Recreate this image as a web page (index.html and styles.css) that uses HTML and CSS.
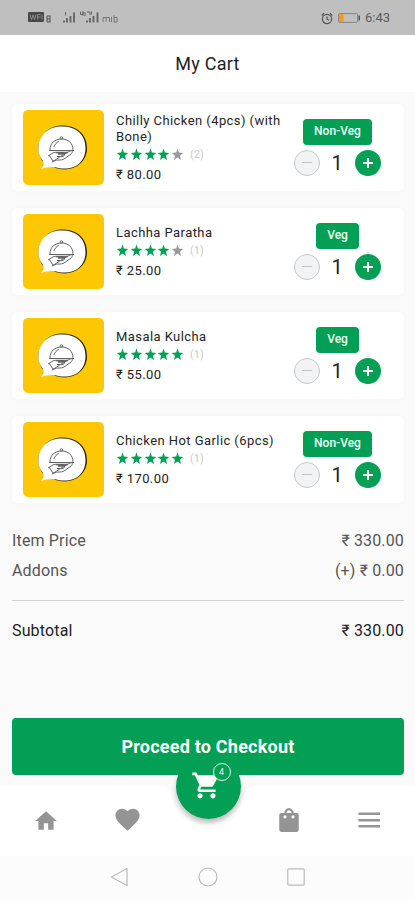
FILE: index.html
```html
<!DOCTYPE html>
<html lang="en">
<head>
<meta charset="utf-8">
<title>My Cart</title>
<link rel="stylesheet" href="styles.css">
</head>
<body>
<svg class="defs" width="0" height="0" aria-hidden="true">
  <symbol id="star" viewBox="0 0 24 24"><path d="M12 17.6 18.6 22l-2.1-7.9L22.500 9l-8-.6L12 1 9.500 8.400l-8 .6 6 5.100L5.400 22z"/></symbol>
  <symbol id="dish" viewBox="0 0 80 75">
    <path d="M19 56c7 0 9 0 13 2 16 5 31-4 31.500-19S53 15.500 39 15.500 14.500 26 15 39c.5 7 3 11 5.500 14z" fill="#302b18"/>
    <path d="M17 59c4-3 3-6 2-9-3-3-4.500-8-4-14 1-12 11-19.500 23-19.500 15 0 24 8 24 21.500 0 15-12 23-27 20-7-2-11-1-18 1z" fill="#fff"/>
    <g fill="none" stroke="#666" stroke-width="1" transform="translate(-.5 1)">
      <path d="M27 39c0-7 5-11 11.500-11S50 32 50 39M26 39.500h25M31 36c1-3 3-5 5-5.500"/>
      <circle cx="38.500" cy="27" r="1.300"/>
      <path d="M25 45l4-2.500c3-2 5-1 7 0h5c2 1 0 3-2 3h-5M40 44l7-4c3-1 3 1 1 3l-7 5c-3 2-7 0-10 2l-2 1zM26 44l4 6"/>
      <path d="M33 41.500h12M35 43h7" stroke-width="1.300"/>
    </g>
  </symbol>
</svg>
<div class="status">
  <svg class="status-left" width="96" height="16" viewBox="0 0 96 16">
    <rect x="1" y="2" width="16" height="10" rx="1" fill="#484848"/>
    <path d="M3 4.500l1.500 5L6 5l1.500 4.500L9 4.500M10.500 9.500v-5h3M10.500 7h3M15 4.500v5" fill="none" stroke="#999" stroke-width=".8"/>
    <path d="M20 6v6M20 6h3v6h-3M20 9h3" fill="none" stroke="#555" stroke-width="1.100"/>
    <path d="M37 12.500v-2M40 12.500V8M43.500 12.500V6M47 12.500V2.500M60 12.500v-2M63 12.500V8M66.500 12.500V6M70.500 12.500V2.500" stroke="#666" stroke-width="1.900"/>
    <path d="M38.500 2v3.500M53.500 1.500v3h2.500V1.500v4.500M58 2v4M60 2h3v3M64.500 1.500v3" fill="none" stroke="#666" stroke-width="1"/>
    <path d="M76 12V7.500h3V12M79 7.500h3.500V12M84.500 7v5M87 5v7h3V7.500h-3" fill="none" stroke="#777" stroke-width="1"/>
  </svg>
  <div class="status-right">
    <svg width="12" height="13" viewBox="0 0 12 13" fill="none" stroke="#555" stroke-width="1.200"><circle cx="6" cy="7" r="4.600"/><path d="M6 4.500V7l2 1.300M.7 3.500 3 1.300M11.300 3.500 9 1.300"/></svg>
    <svg class="battery" width="23" height="12" viewBox="0 0 23 12"><rect x=".6" y="1.600" width="19" height="8.800" rx="1" fill="none" stroke="#858585"/><path d="M1 2h4.500v8H1z" fill="#f39a1d"/><path d="M21.200 3.500v5" stroke="#555" stroke-width="1.500"/></svg>
    <span class="clock">6:43</span>
  </div>
</div>
<header class="header"><h1>My Cart</h1></header>
<main class="main">
  <section class="items">
    <article class="card">
      <svg class="thumb"><use href="#dish"/></svg>
      <div class="info">
        <h2>Chilly Chicken (4pcs) (with<br>Bone)</h2>
        <div class="rating"><svg><use href="#star"/></svg><svg><use href="#star"/></svg><svg><use href="#star"/></svg><svg><use href="#star"/></svg><svg class="off"><use href="#star"/></svg><span>(2)</span></div>
        <p class="price">₹ 80.00</p>
      </div>
      <div class="actions">
        <span class="tag">Non-Veg</span>
        <div class="stepper"><button class="round minus" aria-label="Less"></button><b>1</b><button class="round plus" aria-label="More"></button></div>
      </div>
    </article>
    <article class="card">
      <svg class="thumb"><use href="#dish"/></svg>
      <div class="info">
        <h2>Lachha Paratha</h2>
        <div class="rating"><svg><use href="#star"/></svg><svg><use href="#star"/></svg><svg><use href="#star"/></svg><svg><use href="#star"/></svg><svg class="off"><use href="#star"/></svg><span>(1)</span></div>
        <p class="price">₹ 25.00</p>
      </div>
      <div class="actions">
        <span class="tag">Veg</span>
        <div class="stepper"><button class="round minus" aria-label="Less"></button><b>1</b><button class="round plus" aria-label="More"></button></div>
      </div>
    </article>
    <article class="card">
      <svg class="thumb"><use href="#dish"/></svg>
      <div class="info">
        <h2>Masala Kulcha</h2>
        <div class="rating"><svg><use href="#star"/></svg><svg><use href="#star"/></svg><svg><use href="#star"/></svg><svg><use href="#star"/></svg><svg><use href="#star"/></svg><span>(1)</span></div>
        <p class="price">₹ 55.00</p>
      </div>
      <div class="actions">
        <span class="tag">Veg</span>
        <div class="stepper"><button class="round minus" aria-label="Less"></button><b>1</b><button class="round plus" aria-label="More"></button></div>
      </div>
    </article>
    <article class="card">
      <svg class="thumb"><use href="#dish"/></svg>
      <div class="info">
        <h2>Chicken Hot Garlic (6pcs)</h2>
        <div class="rating"><svg><use href="#star"/></svg><svg><use href="#star"/></svg><svg><use href="#star"/></svg><svg><use href="#star"/></svg><svg><use href="#star"/></svg><span>(1)</span></div>
        <p class="price">₹ 170.00</p>
      </div>
      <div class="actions">
        <span class="tag">Non-Veg</span>
        <div class="stepper"><button class="round minus" aria-label="Less"></button><b>1</b><button class="round plus" aria-label="More"></button></div>
      </div>
    </article>
  </section>
  <section class="totals">
    <div class="line"><span>Item Price</span><span>₹ 330.00</span></div>
    <div class="line"><span>Addons</span><span>(+) ₹ 0.00</span></div>
    <div class="line subtotal"><span>Subtotal</span><span>₹ 330.00</span></div>
  </section>
  <button class="checkout">Proceed to Checkout</button>
</main>
<nav class="tabs">
  <svg class="tabs-bg" width="415" height="70" viewBox="0 0 415 70"><path d="M0 0H157C166 0 169 4 171 10C176 27 190 38 207.500 38S239 27 244 10C246 4 249 0 258 0H415V70H0z" fill="#fff"/></svg>
  <svg class="tab" viewBox="0 0 24 24"><path d="M10 20v-6h4v6h5v-8h3L12 3 2 12h3v8z"/></svg>
  <svg class="tab heart" viewBox="0 0 24 24"><path d="m12 21.350-1.450-1.320C5.400 15.360 2 12.280 2 8.500 2 5.420 4.420 3 7.500 3c1.740 0 3.410.81 4.500 2.090C13.090 3.810 14.760 3 16.500 3 19.580 3 22 5.420 22 8.500c0 3.780-3.400 6.860-8.550 11.540z"/></svg>
  <a class="fab">
    <svg viewBox="0 0 24 24"><path d="M7 18c-1.100 0-1.990.9-1.990 2S5.900 22 7 22s2-.9 2-2-.9-2-2-2zM1 2v2h2l3.600 7.590-1.350 2.450C4.520 15.370 5.480 17 7 17h12v-2H7.420c-.14 0-.25-.11-.25-.25l.03-.12.900-1.630h7.450c.75 0 1.410-.41 1.750-1.030l3.580-6.490A1 1 0 0 0 20 4H5.210l-.94-2zM17 18c-1.100 0-1.990.9-1.990 2s.89 2 1.990 2 2-.9 2-2-.9-2-2-2z"/></svg>
    <span class="count">4</span>
  </a>
  <svg class="tab bag" viewBox="0 0 24 24"><path fill-rule="evenodd" d="M5 5.500h2.600C8 3 9.700 1 12 1s4 2 4.400 4.500H19a2 2 0 0 1 2 2V21a2 2 0 0 1-2 2H5a2 2 0 0 1-2-2V7.500a2 2 0 0 1 2-2zm4.600 0h4.800C14 4 13.200 3 12 3s-2 1-2.400 2.500zM8.300 7.500a1.500 1.500 0 1 0 0 3 1.500 1.500 0 0 0 0-3zm7.400 0a1.500 1.500 0 1 0 0 3 1.500 1.500 0 0 0 0-3z"/></svg>
  <svg class="tab" viewBox="0 0 26 26"><path d="M2.500 4.500h21.500v2.600H2.500zM2.500 11h21.500v2.600H2.500zM2.500 17h21.500v2.600H2.500z"/></svg>
</nav>
<footer class="system">
  <svg viewBox="0 0 20 20"><path d="M1.500 10 17 1.500v17z"/></svg>
  <svg viewBox="0 0 20 20"><circle cx="10" cy="10" r="9"/></svg>
  <svg viewBox="0 0 20 20"><rect x="1.800" y="1.800" width="16.400" height="16.400" rx="1"/></svg>
</footer>
</body>
</html>
```
FILE: styles.css
```css
* { box-sizing: border-box; }
body {
  margin: 0;
  width: 415px;
  height: 900px;
  overflow: hidden;
  display: flex;
  flex-direction: column;
  background: #fafafa;
  color: #222;
  font-family: Roboto, "Noto Sans", sans-serif;
}
h1, h2, p { margin: 0; font-weight: 400; }
button { border: 0; padding: 0; font-family: inherit; }
.defs { position: absolute; }
.status {
  height: 35px;
  flex: none;
  background: #bfbfbf;
  display: flex;
  justify-content: space-between;
  align-items: center;
  padding: 1px 25px 0 27px;
}
.status-right { display: flex; align-items: center; gap: 5px; color: #5c5c5c; }
.clock { font-size: 13px; line-height: 16px; width: 25px; white-space: nowrap; }
.battery { margin-right: -1px; }
.header {
  height: 57px;
  flex: none;
  background: #fff;
  display: flex;
  align-items: center;
  justify-content: center;
  padding-top: 1px;
}
.header h1 { font-size: 18px; line-height: 22px; letter-spacing: .25px; }
.main { height: 694px; flex: none; padding: 12px 11px 11px 12px; display: flex; flex-direction: column; }
.items { display: flex; flex-direction: column; gap: 17px; }
.card {
  height: 87px;
  background: #fff;
  border-radius: 5px;
  box-shadow: 0 0 6px rgba(0, 0, 0, .025);
  display: flex;
  align-items: center;
  padding: 0 23px 0 11px;
}
.thumb { width: 81px; height: 75px; flex: none; background: #fec704; border-radius: 5px; }
.info { flex: 1; min-width: 0; margin-left: 12px; padding-top: 2px; white-space: nowrap; }
.info h2 { font-size: 13px; line-height: 16px; letter-spacing: .43px; color: #252525; }
.rating { display: flex; align-items: center; height: 19px; gap: .8px; }
.rating svg { width: 13px; height: 13px; fill: #039f55; }
.rating .off { fill: #9a9a9a; }
.rating span { margin-left: 5px; font-size: 11px; color: #cbcbcb; }
.price { font-size: 13px; line-height: 21px; margin-bottom: -1px; letter-spacing: .4px; color: #222; }
.actions { width: 87px; flex: none; display: flex; flex-direction: column; align-items: center; gap: 5px; margin-top: -1px; }
.tag {
  height: 26px;
  padding: 0 11px;
  border-radius: 4px;
  background: #039f55;
  color: #e9fff3;
  font-size: 12px;
  font-weight: 500;
  line-height: 25px;
}
.stepper { width: 87px; display: flex; align-items: center; justify-content: space-between; }
.stepper b { font-size: 20px; line-height: 26px; font-weight: 400; margin-right: 1px; }
.round { width: 26px; height: 26px; border-radius: 50%; display: grid; place-items: center; place-content: center; }
.minus { background: #f1f3f4; border: 1px solid #c6c8c9; }
.plus { background: #039f55; }
.round::before, .plus::after { content: ""; grid-area: 1 / 1; width: 10px; height: 1px; background: #bcc3c8; }
.plus::before { height: 2px; background: #fff; }
.plus::after { width: 2px; height: 10px; background: #fff; }
.totals { padding-top: 23px; font-size: 16px; color: #555; }
.line { height: 30px; line-height: 30px; letter-spacing: .15px; display: flex; justify-content: space-between; }
.subtotal { height: 45px; margin-top: 14px; padding-top: 15px; border-top: 1px solid #d0d0d0; color: #222; }
.checkout {
  height: 57px;
  margin-top: auto;
  border-radius: 4px;
  background: #039f55;
  color: #fff;
  font-size: 18px;
  font-weight: 700;
  letter-spacing: .22px;
}
.tabs {
  height: 70px;
  flex: none;
  position: relative;
  display: flex;
  justify-content: space-between;
  align-items: flex-start;
  padding: 0 33px;
}
.tabs-bg { position: absolute; left: 0; top: 0; }
.tab { width: 26px; height: 26px; margin-top: 22px; position: relative; fill: #949494; }
.heart { width: 29px; height: 29px; margin: 19px 0 0 20px; }
.bag { width: 26px; height: 26px; margin: 21px 20px 0 0; }
.fab {
  position: relative;
  width: 65px;
  height: 65px;
  margin: -32px 1px 0 -1px;
  border-radius: 50%;
  background: #039f55;
}
.fab::before {
  content: "";
  position: absolute;
  inset: 0;
  border-radius: 50%;
  box-shadow: 0 4px 6px -1px rgba(0, 0, 0, .3);
  clip-path: inset(21px -12px -16px -12px);
}
.fab > svg { position: absolute; left: 15px; top: 16px; width: 31px; height: 31px; fill: #fff; }
.count {
  position: absolute;
  left: 37px;
  top: 9px;
  width: 18px;
  height: 18px;
  border: 1.500px solid #dcf5e7;
  border-radius: 50%;
  background: #039f55;
  color: #e2f7eb;
  font-size: 9px;
  line-height: 16px;
  text-align: center;
}
.system {
  flex: 1;
  display: flex;
  justify-content: center;
  gap: 68px;
  padding-top: 11px;
  background: #fcfcfc;
}
.system svg { width: 20px; height: 20px; fill: none; stroke: #bbb; stroke-width: 1.200; }
```
